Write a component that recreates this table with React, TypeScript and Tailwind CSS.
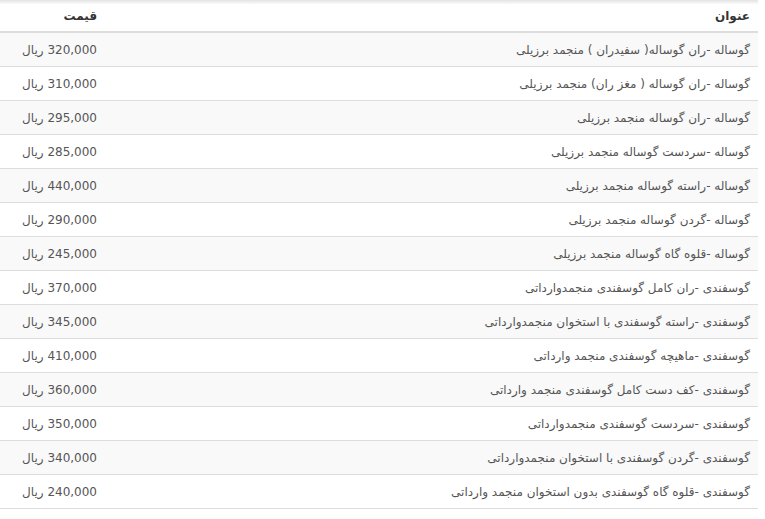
import React from "react";

const rows: [string, string][] = [
  ["گوساله -ران گوساله( سفیدران ) منجمد برزیلی", "320,000"],
  ["گوساله -ران گوساله ( مغز ران) منجمد برزیلی", "310,000"],
  ["گوساله -ران گوساله منجمد برزیلی", "295,000"],
  ["گوساله -سردست گوساله منجمد برزیلی", "285,000"],
  ["گوساله -راسته گوساله منجمد برزیلی", "440,000"],
  ["گوساله -گردن گوساله منجمد برزیلی", "290,000"],
  ["گوساله -قلوه گاه گوساله منجمد برزیلی", "245,000"],
  ["گوسفندی -ران کامل گوسفندی منجمدوارداتی", "370,000"],
  ["گوسفندی -راسته گوسفندی با استخوان منجمدوارداتی", "345,000"],
  ["گوسفندی -ماهیچه گوسفندی منجمد وارداتی", "410,000"],
  ["گوسفندی -کف دست کامل گوسفندی منجمد وارداتی", "360,000"],
  ["گوسفندی -سردست گوسفندی منجمدوارداتی", "350,000"],
  ["گوسفندی -گردن گوسفندی با استخوان منجمدوارداتی", "340,000"],
  ["گوسفندی -قلوه گاه گوسفندی بدون استخوان منجمد وارداتی", "240,000"],
];

export default function App() {
  return (
    <div className="w-[765px] h-[519px] bg-white overflow-hidden" style={{ fontFamily: "'DejaVu Sans', sans-serif" }}>
      <div dir="rtl" className="w-[758px] text-[12px] text-[#555]">
        <div className="flex h-[33px] items-center border-b-2 border-[#ddd] bg-gradient-to-b from-[#e3e3e3] via-white via-[15%] to-white font-bold text-[#333]">
          <div className="flex-1 px-2">عنوان</div>
          <div className="w-[105px] px-2">قیمت</div>
        </div>
        {rows.map(([t, p], i) => (
          <div key={i} className={`flex h-[34px] items-center border-b border-[#ddd] ${i % 2 === 0 ? "bg-[#f9f9f9]" : "bg-white"}`}>
            <div className="flex-1 px-2 whitespace-nowrap">{t}</div>
            <div className="w-[105px] px-2 whitespace-nowrap">
              {p} <span className="tracking-[-0.5px]">ریال</span>
            </div>
          </div>
        ))}
      </div>
    </div>
  );
}
